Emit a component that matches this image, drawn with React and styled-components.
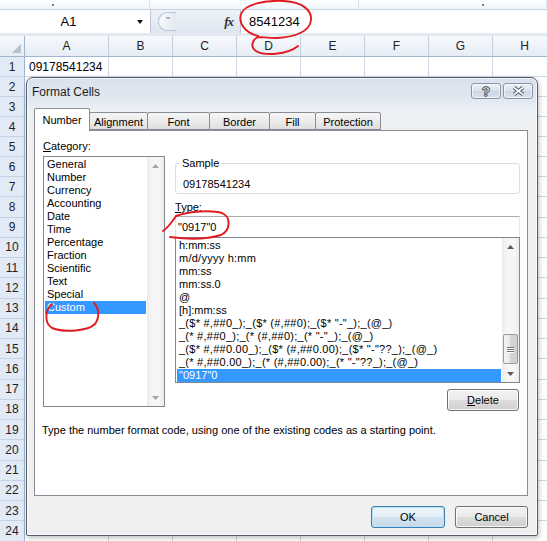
import React from "react";
import styled, { createGlobalStyle } from "styled-components";

const GlobalStyle = createGlobalStyle`
  html, body { margin: 0; padding: 0; }
  body {
    width: 547px;
    height: 541px;
    overflow: hidden;
    background: #fff;
    font-family: "Liberation Sans", Arial, sans-serif;
  }
`;

const Sheet = styled.div`
  position: relative;
  width: 547px;
  height: 541px;
  overflow: hidden;
  background: #fff;
  color: #000;
`;

/* ---------- ribbon edge + formula bar ---------- */

const RibbonEdge = styled.div`
  display: flex;
  height: 10px;
  box-sizing: border-box;
  background: linear-gradient(#fdfeff, #f1f5fa);
  border-bottom: 1px solid #c5d2e1;
`;

const RibbonGroup = styled.div`
  width: ${(p) => p.$w}px;
  flex: ${(p) => (p.$w ? "none" : 1)};
  border-right: 1px solid #dbe3ec;
  display: flex;
  align-items: flex-start;
  justify-content: ${(p) => p.$dot || "center"};
  padding: 0 6px;
  box-sizing: border-box;
`;

const Dot = styled.span`
  width: 2px;
  height: 2px;
  margin-top: 4px;
  background: #6d7d92;
`;

const Spacer = styled.span`
  width: ${(p) => p.$w}px;
`;

const FormulaBar = styled.div`
  display: flex;
  height: 26px;
  box-sizing: border-box;
  padding-bottom: 3px;
  background: #e3e9f1;
`;

const NameBox = styled.div`
  width: 150px;
  display: flex;
  align-items: center;
  background: #fff;
  border-right: 1px solid #b9c7d8;
  font-size: 13px;
`;

const NameText = styled.span`
  width: 137px;
  text-align: center;
`;

const DropTriangle = styled.span`
  width: 0;
  height: 0;
  border-left: 3.5px solid transparent;
  border-right: 3.5px solid transparent;
  border-top: 4px solid #111;
`;

const FxZone = styled.div`
  width: 89px;
  display: flex;
  align-items: center;
  justify-content: space-between;
  padding: 0 7px;
  box-sizing: border-box;
  background: linear-gradient(#eef2f8, #dfe6ef);
`;

const Grip = styled.div`
  width: 18px;
  height: 19px;
  border: 1px solid #b7c3d3;
  border-right: none;
  border-radius: 10px 0 0 10px;
  background: linear-gradient(90deg, #f7f9fc, #e3e9f1);
  display: flex;
  justify-content: center;
  padding-top: 4px;
  box-sizing: border-box;
`;

const GripMark = styled.span`
  width: 4px;
  height: 2px;
  background: #a9b6c6;
`;

const Fx = styled.span`
  font-family: "Liberation Serif", "Times New Roman", serif;
  font-style: italic;
  font-weight: bold;
  font-size: 13px;
  color: #333;
  letter-spacing: -1px;
`;

const FormulaInput = styled.div`
  flex: 1;
  display: flex;
  align-items: center;
  padding-left: 8px;
  background: #fff;
  border-left: 1px solid #b9c7d8;
  font-size: 13px;
`;

/* ---------- worksheet grid ---------- */

const Grid = styled.div`
  display: grid;
  grid-template-columns: 25px 84px repeat(7, 64px);
  grid-template-rows: 21px repeat(6, 20px);
  grid-auto-rows: 20.25px;
  width: 557px;
`;

const ColHead = styled.div`
  display: flex;
  align-items: center;
  justify-content: center;
  box-sizing: border-box;
  background: linear-gradient(#f7f9fc, #e6ecf5);
  border-right: 1px solid #c5d1e0;
  border-bottom: 1px solid #9eb6ce;
  font-size: 12px;
  color: #222;
`;

const Corner = styled(ColHead)`
  justify-content: flex-end;
  align-items: flex-end;
  padding: 0 3px 3px 0;
  border-right: 1px solid #9eb6ce;
`;

const RowHead = styled.div`
  display: flex;
  align-items: center;
  justify-content: center;
  box-sizing: border-box;
  background: #e2eaf5;
  border-right: 1px solid #9eb6ce;
  border-bottom: 1px solid #c3d1e3;
  font-size: 12px;
  color: #222;
`;

const Cell = styled.div`
  display: flex;
  align-items: center;
  box-sizing: border-box;
  padding-left: 4px;
  border-right: 1px solid #d0d7e5;
  border-bottom: 1px solid #d0d7e5;
  font-size: 12px;
  white-space: nowrap;
`;

/* ---------- dialog ---------- */

const Dialog = styled.div`
  position: absolute;
  left: 26px;
  top: 77px;
  width: 512px;
  display: flex;
  flex-direction: column;
  box-sizing: border-box;
  border: 1px solid #535d6b;
  border-radius: 7px 7px 2px 2px;
  background: linear-gradient(
    #d9e2ed 0px,
    #e1e8f0 22px,
    #ecf0f5 32px,
    #f0f0f0 60px
  );
  box-shadow: inset 0 0 0 1px rgba(255, 255, 255, 0.7),
    1px 2px 5px rgba(0, 0, 0, 0.25);
  font-size: 11px;
`;

const TitleBar = styled.div`
  display: flex;
  align-items: center;
  height: 28px;
  padding-left: 5px;
`;

const Title = styled.span`
  flex: 1;
  font-size: 12px;
  color: #1c1c1c;
`;

const CaptionButtons = styled.div`
  display: flex;
  gap: 2px;
  align-self: flex-start;
  margin-top: 5px;
  margin-right: 4px;
`;

const CaptionButton = styled.div`
  width: 30px;
  height: 16px;
  box-sizing: border-box;
  display: flex;
  align-items: center;
  justify-content: center;
  border: 1px solid #8795aa;
  border-radius: 3px;
  background: linear-gradient(#eef2f8, #d9e1ec 50%, #ccd6e4 50%, #d9e1ec);
  box-shadow: inset 0 0 0 1px rgba(255, 255, 255, 0.6);
`;

const HelpGlyph = styled.span`
  font-weight: bold;
  font-size: 13px;
  line-height: 13px;
  color: #fff;
  -webkit-text-stroke: 0.6px #4a5565;
  text-shadow: 1px 0 #6a7585, -1px 0 #6a7585, 0 1px #6a7585, 0 -1px #6a7585;
`;

const Body = styled.div`
  padding: 2px 9px 7px 7px;
  display: flex;
  flex-direction: column;
`;

const TabRow = styled.div`
  display: flex;
  height: 22px;
  position: relative;
  z-index: 1;
`;

const Tab = styled.div`
  width: ${(p) => p.$w}px;
  height: ${(p) => (p.$active ? 23 : 18)}px;
  margin-top: ${(p) => (p.$active ? 0 : 4)}px;
  margin-left: ${(p) => (p.$first ? 0 : -1)}px;
  box-sizing: border-box;
  display: flex;
  align-items: center;
  justify-content: center;
  padding-top: ${(p) => (p.$active ? 0 : 1)}px;
  border: 1px solid #898c95;
  border-bottom: ${(p) => (p.$active ? "none" : "1px solid #898c95")};
  border-radius: 2px 2px 0 0;
  background: ${(p) =>
    p.$active ? "#fff" : "linear-gradient(#f6f6f6, #ececec 50%, #dedede)"};
  position: relative;
  z-index: ${(p) => (p.$active ? 2 : 1)};
  color: #000;
`;

const Panel = styled.div`
  height: 366px;
  box-sizing: border-box;
  border: 1px solid #898c95;
  background: #fff;
  padding: 9px 7px 0 8px;
  display: flex;
  flex-direction: column;
`;

const Columns = styled.div`
  display: flex;
  gap: 10px;
`;

const LeftCol = styled.div`
  width: 122px;
  display: flex;
  flex-direction: column;
`;

const RightCol = styled.div`
  width: 345px;
  display: flex;
  flex-direction: column;
`;

const Label = styled.div`
  height: 13px;
  line-height: 13px;
  margin-top: ${(p) => p.$mt || 0}px;
  margin-bottom: ${(p) => p.$mb || 0}px;
`;

const Key = styled.span`
  text-decoration: underline;
  text-underline-offset: 1px;
`;

const ListBox = styled.div`
  height: ${(p) => p.$h}px;
  box-sizing: border-box;
  border: 1px solid #828790;
  background: #fff;
  display: flex;
  overflow: hidden;
`;

const Items = styled.div`
  flex: 1;
  padding: 1px;
  overflow: hidden;
`;

const Item = styled.div`
  height: 13px;
  line-height: 13px;
  padding-left: 2px;
  white-space: nowrap;
  overflow: hidden;
  letter-spacing: ${(p) => (p.$wide ? "0.25px" : "0")};
  background: ${(p) => (p.$selected ? "#3399ff" : "transparent")};
  color: ${(p) => (p.$selected ? "#fff" : "#000")};
`;

const ScrollBar = styled.div`
  width: 17px;
  display: flex;
  flex-direction: column;
  background: linear-gradient(90deg, #ebebeb, #f6f6f6 30%, #f6f6f6 70%, #ececec);
`;

const ScrollArrow = styled.div`
  height: 17px;
  display: flex;
  align-items: center;
  justify-content: center;
  color: ${(p) => p.$color};
`;

const Track = styled.div`
  flex: 1;
  display: flex;
  flex-direction: column;
  justify-content: flex-end;
`;

const Thumb = styled.div`
  height: 30px;
  margin: 0 1px 1px 1px;
  box-sizing: border-box;
  border: 1px solid #9a9a9a;
  border-radius: 2px;
  background: linear-gradient(90deg, #f4f4f4, #e8e8e8 50%, #d6d6d6 50%, #d0d0d0);
  display: flex;
  flex-direction: column;
  align-items: center;
  justify-content: center;
  gap: 1px;
`;

const GripLine = styled.span`
  width: 7px;
  height: 1px;
  background: #707070;
  box-shadow: 0 1px 0 #fff;
`;

const SampleGroup = styled.fieldset`
  margin: 17px 0 0 0;
  padding: 0 0 2px 7px;
  border: 1px solid #d5dfe5;
  border-radius: 3px;
  min-width: 0;
`;

const Legend = styled.legend`
  margin-left: -3px;
  padding: 0 2px;
  line-height: 13px;
  font-size: 11px;
`;

const SampleValue = styled.div`
  margin-top: 8px;
  line-height: 13px;
`;

const TextInput = styled.div`
  height: 21px;
  box-sizing: border-box;
  display: flex;
  align-items: center;
  padding-left: 2px;
  border: 1px solid #e3e9ef;
  border-top-color: #abadb3;
  border-left-color: #e2e3ea;
  border-bottom: none;
  background: #fff;
`;

const ButtonRow = styled.div`
  display: flex;
  justify-content: flex-end;
  gap: 10px;
  margin-top: ${(p) => p.$mt}px;
  padding-right: ${(p) => p.$pr || 0}px;
`;

const Button = styled.div`
  width: ${(p) => p.$w}px;
  height: 22px;
  box-sizing: border-box;
  display: flex;
  align-items: center;
  justify-content: center;
  border: 1px solid ${(p) => (p.$default ? "#3c7fb1" : "#707070")};
  border-radius: 3px;
  background: ${(p) =>
    p.$default
      ? "linear-gradient(#eef5fa, #e3eef6 50%, #d3e3ef 50%, #c8dbea)"
      : "linear-gradient(#f2f2f2, #ebebeb 50%, #dddddd 50%, #cfcfcf)"};
  box-shadow: inset 0 0 0 1px
    ${(p) => (p.$default ? "#b8e0f7" : "rgba(255,255,255,0.85)")};
  color: #000;
`;

const HelpText = styled.div`
  margin-top: 13px;
  margin-left: -1px;
  line-height: 13px;
`;

const Annotations = styled.svg`
  position: absolute;
  left: 0;
  top: 0;
  pointer-events: none;
`;

/* ---------- data ---------- */

const columns = ["A", "B", "C", "D", "E", "F", "G", "H"];
const rowNumbers = Array.from({ length: 25 }, (_, i) => i + 1);

const categories = [
  "General",
  "Number",
  "Currency",
  "Accounting",
  "Date",
  "Time",
  "Percentage",
  "Fraction",
  "Scientific",
  "Text",
  "Special",
  "Custom",
];

const formats = [
  "h:mm:ss",
  "m/d/yyyy h:mm",
  "mm:ss",
  "mm:ss.0",
  "@",
  "[h]:mm:ss",
  '_($* #,##0_);_($* (#,##0);_($* "-"_);_(@_)',
  '_(* #,##0_);_(* (#,##0);_(* "-"_);_(@_)',
  '_($* #,##0.00_);_($* (#,##0.00);_($* "-"??_);_(@_)',
  '_(* #,##0.00_);_(* (#,##0.00);_(* "-"??_);_(@_)',
  '"0917"0',
];

const tabs = [
  { label: "Number", w: 56, active: true },
  { label: "Alignment", w: 59 },
  { label: "Font", w: 63 },
  { label: "Border", w: 61 },
  { label: "Fill", w: 47 },
  { label: "Protection", w: 66 },
];

const Arrow = ({ up }) => (
  <svg width="7" height="4" viewBox="0 0 7 4">
    <path d={up ? "M0 4 L3.5 0 L7 4 Z" : "M0 0 L3.5 4 L7 0 Z"} fill="currentColor" />
  </svg>
);

const Scroll = ({ enabled }) => {
  const color = enabled ? "#5a5a5a" : "#a6a6a6";
  return (
    <ScrollBar>
      <ScrollArrow $color={color}>
        <Arrow up />
      </ScrollArrow>
      <Track>
        {enabled && (
          <Thumb>
            <GripLine />
            <GripLine />
            <GripLine />
          </Thumb>
        )}
      </Track>
      <ScrollArrow $color={color}>
        <Arrow />
      </ScrollArrow>
    </ScrollBar>
  );
};

export default function App() {
  return (
    <Sheet>
      <GlobalStyle />

      <RibbonEdge>
        <RibbonGroup $w={150} $dot="flex-start">
          <Spacer $w={46} />
          <Dot />
        </RibbonGroup>
        <RibbonGroup $w={209} />
        <RibbonGroup $dot="flex-end">
          <Dot />
          <Spacer $w={56} />
        </RibbonGroup>
      </RibbonEdge>

      <FormulaBar>
        <NameBox>
          <NameText>A1</NameText>
          <DropTriangle />
        </NameBox>
        <FxZone>
          <Grip>
            <GripMark />
          </Grip>
          <Fx>fx</Fx>
        </FxZone>
        <FormulaInput>8541234</FormulaInput>
      </FormulaBar>

      <Grid>
        <Corner>
          <svg width="9" height="9" viewBox="0 0 9 9">
            <path d="M9 0 L9 9 L0 9 Z" fill="#b4c0cf" />
          </svg>
        </Corner>
        {columns.map((c) => (
          <ColHead key={c}>{c}</ColHead>
        ))}
        {rowNumbers.map((r) => (
          <React.Fragment key={r}>
            <RowHead>{r < 25 ? r : ""}</RowHead>
            {columns.map((c) => (
              <Cell key={c}>{r === 1 && c === "A" ? "09178541234" : ""}</Cell>
            ))}
          </React.Fragment>
        ))}
      </Grid>

      <Dialog>
        <TitleBar>
          <Title>Format Cells</Title>
          <CaptionButtons>
            <CaptionButton>
              <HelpGlyph>?</HelpGlyph>
            </CaptionButton>
            <CaptionButton>
              <svg width="13" height="10" viewBox="0 0 13 10">
                <path d="M2 1.5 L11 8.5 M11 1.5 L2 8.5" stroke="#4a5565" strokeWidth="3.6" />
                <path d="M2 1.5 L11 8.5 M11 1.5 L2 8.5" stroke="#fff" strokeWidth="1.6" />
              </svg>
            </CaptionButton>
          </CaptionButtons>
        </TitleBar>

        <Body>
          <TabRow>
            {tabs.map((t, i) => (
              <Tab key={t.label} $w={t.w} $active={t.active} $first={i === 0}>
                {t.label}
              </Tab>
            ))}
          </TabRow>

          <Panel>
            <Columns>
              <LeftCol>
                <Label $mb={3}>
                  <Key>C</Key>ategory:
                </Label>
                <ListBox $h={251}>
                  <Items>
                    {categories.map((c) => (
                      <Item key={c} $selected={c === "Custom"}>
                        {c}
                      </Item>
                    ))}
                  </Items>
                  <Scroll />
                </ListBox>
              </LeftCol>

              <RightCol>
                <SampleGroup>
                  <Legend>Sample</Legend>
                  <SampleValue>09178541234</SampleValue>
                </SampleGroup>
                <Label $mt={7} $mb={2}>
                  <Key>T</Key>ype:
                </Label>
                <TextInput>"0917"0</TextInput>
                <ListBox $h={146}>
                  <Items>
                    {formats.map((f) => (
                      <Item key={f} $wide={f.length > 12} $selected={f === '"0917"0'}>
                        {f}
                      </Item>
                    ))}
                  </Items>
                  <Scroll enabled />
                </ListBox>
                <ButtonRow $mt={6} $pr={1}>
                  <Button $w={72}>
                    <span>
                      <Key>D</Key>elete
                    </span>
                  </Button>
                </ButtonRow>
              </RightCol>
            </Columns>
            <HelpText>
              Type the number format code, using one of the existing codes as a starting point.
            </HelpText>
          </Panel>

          <ButtonRow $mt={10}>
            <Button $w={74} $default>
              OK
            </Button>
            <Button $w={73}>Cancel</Button>
          </ButtonRow>
        </Body>
      </Dialog>

      <Annotations width="547" height="541" viewBox="0 0 547 541">
        <g fill="none" stroke="#e11b22" strokeWidth="1.9" strokeLinecap="round" strokeLinejoin="round">
          <path d="M258 36 C246 33 238 24 241 14 C245 4 265 0 284 1 C302 2 312 10 311 20 C310 31 296 37 277 38 C269 38 262 37 258 37 C252 40 250 47 256 51 C264 56 287 55 298 46" />
          <path d="M163 231 C168 228 172 222 176 216 C190 211 212 210 222 213 C231 217 231 230 221 235 C205 240 185 239 170 237" />
          <path d="M52 304 C45 310 44 323 52 328 C65 333 88 331 95 324 C100 317 99 308 94 303" />
        </g>
      </Annotations>
    </Sheet>
  );
}
